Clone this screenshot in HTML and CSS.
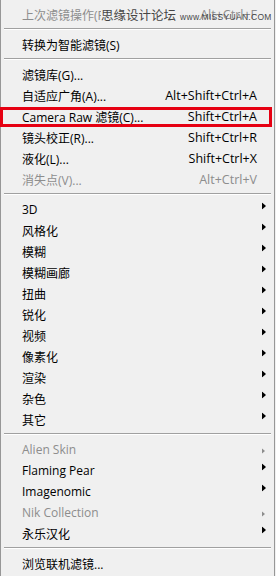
FILE: index.html
```html
<!DOCTYPE html>
<html lang="zh-CN">
<head>
<meta charset="utf-8">
<title>滤镜菜单</title>
<link rel="stylesheet" href="styles.css">
</head>
<body>
<div class="menu">
  <div class="item disabled">
    <span class="label">上次滤镜操作(F)</span><span class="key">Alt+Ctrl+F</span>
    <div class="watermark"><span class="wm-cn">思缘设计论坛</span><span class="wm-url">www.MISSYUAN.COM</span></div>
  </div>
  <div class="sep"></div>
  <div class="item"><span class="label">转换为智能滤镜(S)</span></div>
  <div class="sep"></div>
  <div class="item"><span class="label">滤镜库(G)...</span></div>
  <div class="item"><span class="label">自适应广角(A)...</span><span class="key">Alt+Shift+Ctrl+A</span></div>
  <div class="item highlight"><span class="label">Camera Raw 滤镜(C)...</span><span class="key">Shift+Ctrl+A</span></div>
  <div class="item"><span class="label">镜头校正(R)...</span><span class="key">Shift+Ctrl+R</span></div>
  <div class="item"><span class="label">液化(L)...</span><span class="key">Shift+Ctrl+X</span></div>
  <div class="item disabled"><span class="label">消失点(V)...</span><span class="key">Alt+Ctrl+V</span></div>
  <div class="sep"></div>
  <div class="item"><span class="label">3D</span><svg class="arrow" width="4" height="7" viewBox="0 0 4 7"><path d="M0 0L4 3.5L0 7Z"/></svg></div>
  <div class="item"><span class="label">风格化</span><svg class="arrow" width="4" height="7" viewBox="0 0 4 7"><path d="M0 0L4 3.5L0 7Z"/></svg></div>
  <div class="item"><span class="label">模糊</span><svg class="arrow" width="4" height="7" viewBox="0 0 4 7"><path d="M0 0L4 3.5L0 7Z"/></svg></div>
  <div class="item"><span class="label">模糊画廊</span><svg class="arrow" width="4" height="7" viewBox="0 0 4 7"><path d="M0 0L4 3.5L0 7Z"/></svg></div>
  <div class="item"><span class="label">扭曲</span><svg class="arrow" width="4" height="7" viewBox="0 0 4 7"><path d="M0 0L4 3.5L0 7Z"/></svg></div>
  <div class="item"><span class="label">锐化</span><svg class="arrow" width="4" height="7" viewBox="0 0 4 7"><path d="M0 0L4 3.5L0 7Z"/></svg></div>
  <div class="item"><span class="label">视频</span><svg class="arrow" width="4" height="7" viewBox="0 0 4 7"><path d="M0 0L4 3.5L0 7Z"/></svg></div>
  <div class="item"><span class="label">像素化</span><svg class="arrow" width="4" height="7" viewBox="0 0 4 7"><path d="M0 0L4 3.5L0 7Z"/></svg></div>
  <div class="item"><span class="label">渲染</span><svg class="arrow" width="4" height="7" viewBox="0 0 4 7"><path d="M0 0L4 3.5L0 7Z"/></svg></div>
  <div class="item"><span class="label">杂色</span><svg class="arrow" width="4" height="7" viewBox="0 0 4 7"><path d="M0 0L4 3.5L0 7Z"/></svg></div>
  <div class="item"><span class="label">其它</span><svg class="arrow" width="4" height="7" viewBox="0 0 4 7"><path d="M0 0L4 3.5L0 7Z"/></svg></div>
  <div class="sep"></div>
  <div class="item disabled"><span class="label">Alien Skin</span><svg class="arrow" width="4" height="7" viewBox="0 0 4 7"><path d="M0 1L3 3.5L0 6Z"/></svg></div>
  <div class="item"><span class="label">Flaming Pear</span><svg class="arrow" width="4" height="7" viewBox="0 0 4 7"><path d="M0 0L4 3.5L0 7Z"/></svg></div>
  <div class="item"><span class="label">Imagenomic</span><svg class="arrow" width="4" height="7" viewBox="0 0 4 7"><path d="M0 0L4 3.5L0 7Z"/></svg></div>
  <div class="item disabled"><span class="label">Nik Collection</span><svg class="arrow" width="4" height="7" viewBox="0 0 4 7"><path d="M0 1L3 3.5L0 6Z"/></svg></div>
  <div class="item"><span class="label">永乐汉化</span><svg class="arrow" width="4" height="7" viewBox="0 0 4 7"><path d="M0 0L4 3.5L0 7Z"/></svg></div>
  <div class="sep"></div>
  <div class="item"><span class="label">浏览联机滤镜...</span></div>
</div>
</body>
</html>
```
FILE: styles.css
```css
* { box-sizing: border-box; }
html, body {
  margin: 0;
  background: #f0f0f0;
}
body {
  width: 276px;
  height: 576px;
  overflow: hidden;
  font-family: "Open Sans", "Noto Sans CJK SC", sans-serif;
  font-size: 12px;
  color: #000;
}
.menu {
  width: 275px;
  height: 576px;
  border-left: 1px solid #979797;
  border-right: 1px solid #979797;
  padding-top: 4px;
}
.item {
  position: relative;
  display: flex;
  align-items: center;
  height: 21px;
  padding: 0 8px 0 21px;
  white-space: nowrap;
}
.label { flex: 1; }
.key {
  margin-right: 9px;
  font-size: 12.5px;
}
.arrow {
  fill: #000;
  transform: translateY(-3.5px);
}
.disabled { color: #8d8d8d; }
.disabled .arrow {
  fill: #8d8d8d;
  transform: translateY(1.5px);
}
.sep {
  height: 2px;
  margin: 3px 3px 4px 3px;
  border-top: 1px solid #a0a0a0;
  border-bottom: 1px solid #ffffff;
}
.highlight::after {
  content: "";
  position: absolute;
  left: -1px;
  right: 2px;
  top: 1px;
  bottom: 0;
  border: 3px solid #e60012;
}
.watermark {
  position: absolute;
  left: 100px;
  top: 0;
  height: 21px;
  display: flex;
  align-items: center;
}
.wm-cn {
  font-size: 12.5px;
  color: #454545;
  background: #f0f0f0;
  padding-right: 4px;
}
.wm-url {
  font-family: "Liberation Sans", sans-serif;
  font-size: 8.5px;
  color: #4a4a4a;
  letter-spacing: 0.3px;
  transform: translateY(2px);
}
```
